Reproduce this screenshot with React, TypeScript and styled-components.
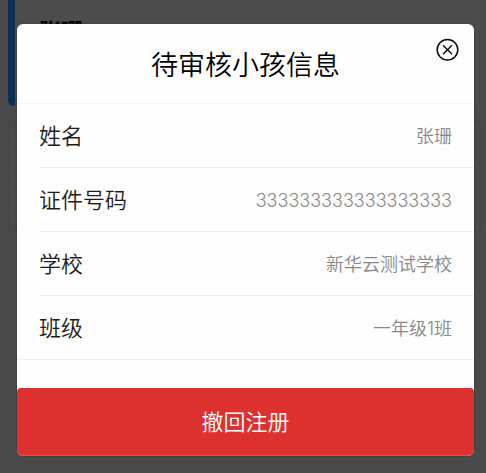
import React from "react";
import styled, { createGlobalStyle } from "styled-components";

const GlobalStyle = createGlobalStyle`
  *, *::before, *::after { box-sizing: border-box; }
  html, body, #root { height: 100%; }
  body {
    margin: 0;
    background: #4a4a4a;
    font-family: "Noto Sans CJK SC", sans-serif;
  }
`;

const Screen = styled.div`
  position: relative;
  min-height: 100%;
  overflow: hidden;
`;

const Backdrop = styled.div`
  position: absolute;
  inset: 0;
  padding: 0 4px 0 8px;
`;

const ProfileCard = styled.div`
  height: 106px;
  padding: 13px 24px;
  border-left: 7px solid #0d2f56;
  border-radius: 0 0 6px 6px;
  background: #4c4c4c;
  color: #000;
  font-size: 22px;
  line-height: 32px;
  font-weight: 700;
`;

const DashedCard = styled.div`
  height: 110px;
  margin-top: 15px;
  border: 1px dashed #404040;
  border-radius: 4px;
`;

const Dialog = styled.section`
  position: relative;
  display: flex;
  flex-direction: column;
  margin: 24px 12px 17px 17px;
  border-radius: 6px;
  background: #fefefe;
  box-shadow: 0 0 2px #2c2c2c;
`;

const Header = styled.header`
  display: flex;
  align-items: center;
  justify-content: center;
  height: 80px;
  border-bottom: 1px solid #f4f4f4;
`;

const Title = styled.h1`
  margin: 0;
  color: #000;
  font-size: 27px;
  line-height: 40px;
  font-weight: 350;
`;

const CloseButton = styled.button`
  position: absolute;
  top: 14px;
  right: 14px;
  width: 24px;
  height: 24px;
  padding: 0;
  border: 0;
  background: none;
  color: #0b0b10;
  cursor: pointer;

  svg { display: block; }
`;

const Details = styled.dl`
  margin: 0 0 28px;
`;

const Row = styled.div<{ $full?: boolean }>`
  display: flex;
  align-items: center;
  justify-content: space-between;
  height: 64px;
  margin-left: ${(p) => (p.$full ? 0 : 22)}px;
  padding: 0 22px 0 ${(p) => (p.$full ? 22 : 0)}px;
  border-bottom: 1px solid #efefef;
`;

const Label = styled.dt`
  padding-bottom: 4px;
  color: #1c1c1c;
  font-size: 22px;
  line-height: 32px;
  font-weight: 350;
`;

const Value = styled.dd`
  margin: 0;
  padding-top: 2px;
  color: #888;
  font-family: Inter, "Noto Sans CJK SC", sans-serif;
  font-size: 18px;
  line-height: 28px;
  font-weight: 350;
`;

const RevokeButton = styled.button`
  height: 68px;
  padding: 0 0 4px;
  border: 0;
  border-bottom: 1px solid #a56a6a;
  border-radius: 4px 4px 6px 6px;
  background: #dd3130;
  color: #fff;
  font-family: inherit;
  font-size: 22px;
  line-height: 32px;
  font-weight: 350;
  cursor: pointer;
`;

const details = [
  { label: "姓名", value: "张珊" },
  { label: "证件号码", value: "333333333333333333" },
  { label: "学校", value: "新华云测试学校" },
  { label: "班级", value: "一年级1班" },
];

export default function App() {
  return (
    <Screen>
      <GlobalStyle />
      <Backdrop aria-hidden="true">
        <ProfileCard>张珊</ProfileCard>
        <DashedCard />
      </Backdrop>
      <Dialog role="dialog" aria-modal="true" aria-labelledby="dialog-title">
        <Header>
          <Title id="dialog-title">待审核小孩信息</Title>
          <CloseButton type="button" aria-label="关闭">
            <svg width="24" height="24" viewBox="0 0 24 24" fill="none" stroke="currentColor" strokeWidth="1.5" strokeLinecap="round">
              <circle cx="11.5" cy="11.7" r="10.3" />
              <path d="M7.5 7.7l8 8M15.5 7.7l-8 8" />
            </svg>
          </CloseButton>
        </Header>
        <Details>
          {details.map((item, index) => (
            <Row key={item.label} $full={index === details.length - 1}>
              <Label>{item.label}</Label>
              <Value>{item.value}</Value>
            </Row>
          ))}
        </Details>
        <RevokeButton type="button">撤回注册</RevokeButton>
      </Dialog>
    </Screen>
  );
}
